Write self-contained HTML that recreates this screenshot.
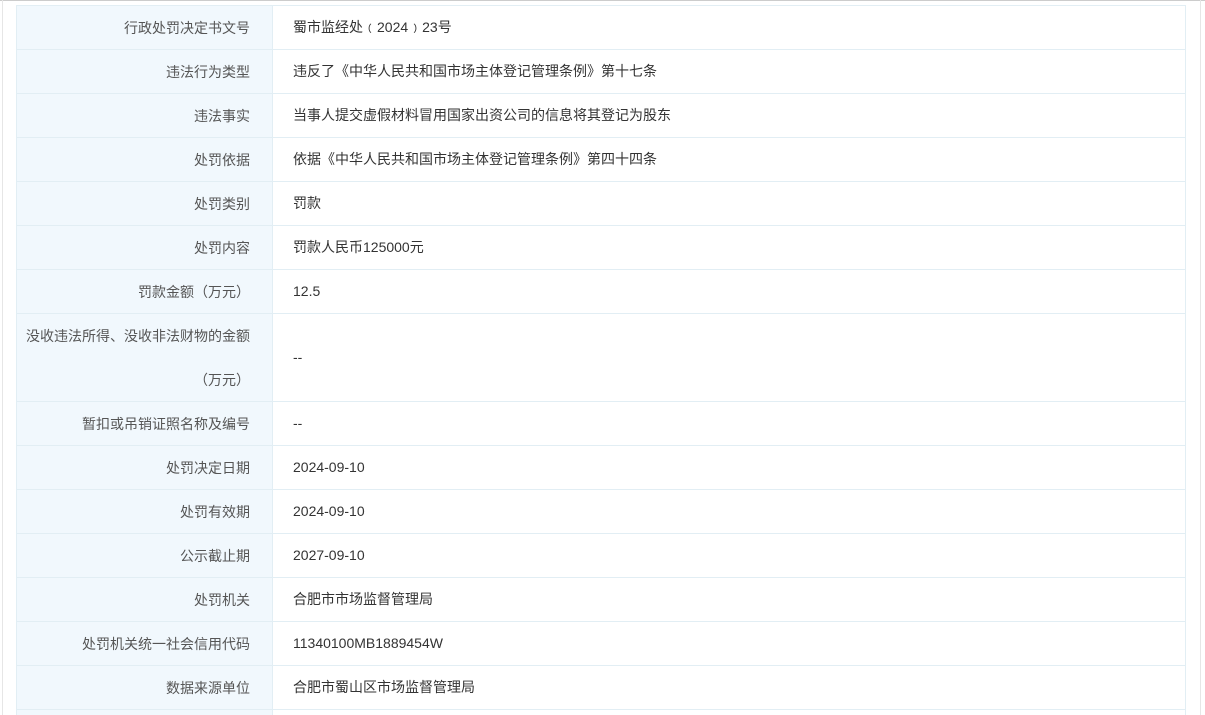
<!DOCTYPE html>
<html><head><meta charset="utf-8"><style>
html,body{margin:0;padding:0;background:#fff;width:1205px;height:715px;overflow:hidden}
body{font-family:"Liberation Sans","Noto Sans CJK SC",sans-serif;position:relative}
.top{position:absolute;left:0;top:0;width:1205px;height:1px;background:#ccc}
.vl{position:absolute;left:2px;top:0;width:1px;height:715px;background:#e6e6e6}
.vr{position:absolute;left:1200px;top:0;width:1px;height:715px;background:#e6e6e6}
.t{position:absolute;left:16px;top:5px;width:1168px;border:1px solid #e2eef4;border-bottom:none}
.r{display:flex;height:43px;border-bottom:1px solid #e2eef4}
.r.tall{height:87px}
.l{box-sizing:border-box;width:256px;flex:none;background:#f1f8fd;color:#555;text-align:right;padding:0 22px 0 0;font-size:14px;line-height:44px;border-right:1px solid #e2eef4;white-space:nowrap}
.v{color:#333;padding-left:20px;font-size:14px;line-height:43px}
.tall .v{line-height:87px}
</style></head><body>
<div class="top"></div><div class="vl"></div><div class="vr"></div>
<div class="t">
<div class="r"><div class="l">行政处罚决定书文号</div><div class="v">蜀市监经处﹙2024﹚23号</div></div>
<div class="r"><div class="l">违法行为类型</div><div class="v">违反了《中华人民共和国市场主体登记管理条例》第十七条</div></div>
<div class="r"><div class="l">违法事实</div><div class="v">当事人提交虚假材料冒用国家出资公司的信息将其登记为股东</div></div>
<div class="r"><div class="l">处罚依据</div><div class="v">依据《中华人民共和国市场主体登记管理条例》第四十四条</div></div>
<div class="r"><div class="l">处罚类别</div><div class="v">罚款</div></div>
<div class="r"><div class="l">处罚内容</div><div class="v">罚款人民币125000元</div></div>
<div class="r"><div class="l">罚款金额（万元）</div><div class="v">12.5</div></div>
<div class="r tall"><div class="l">没收违法所得、没收非法财物的金额<br>（万元）</div><div class="v">--</div></div>
<div class="r"><div class="l">暂扣或吊销证照名称及编号</div><div class="v">--</div></div>
<div class="r"><div class="l">处罚决定日期</div><div class="v">2024-09-10</div></div>
<div class="r"><div class="l">处罚有效期</div><div class="v">2024-09-10</div></div>
<div class="r"><div class="l">公示截止期</div><div class="v">2027-09-10</div></div>
<div class="r"><div class="l">处罚机关</div><div class="v">合肥市市场监督管理局</div></div>
<div class="r"><div class="l">处罚机关统一社会信用代码</div><div class="v">11340100MB1889454W</div></div>
<div class="r"><div class="l">数据来源单位</div><div class="v">合肥市蜀山区市场监督管理局</div></div>
<div class="r"><div class="l"></div><div class="v"></div></div>
</div>
</body></html>
